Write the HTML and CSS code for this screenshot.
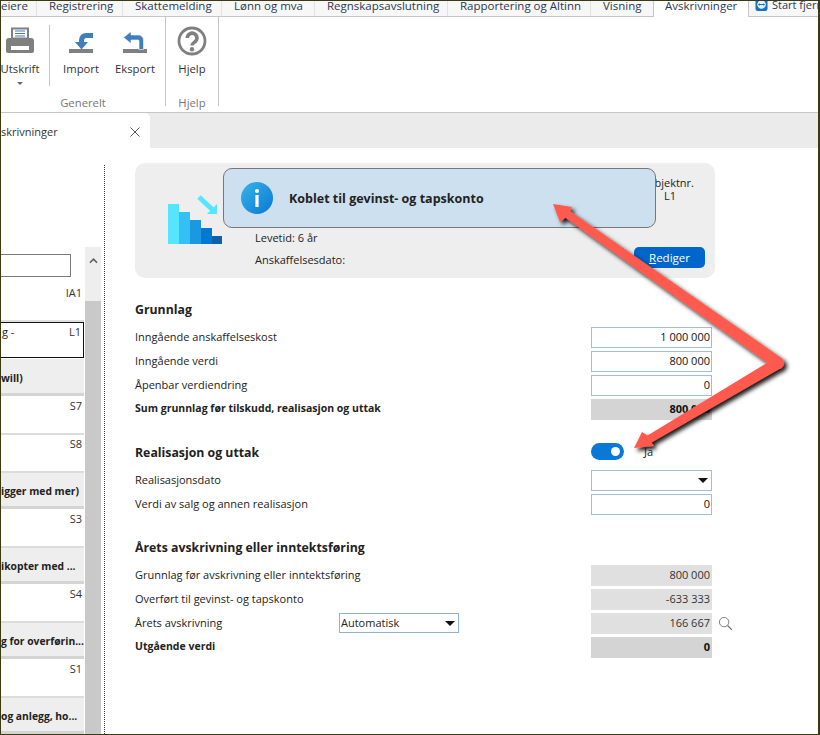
FILE: index.html
```html
<!DOCTYPE html>
<html lang="no">
<head>
  <meta charset="UTF-8" />
  <meta name="viewport" content="width=device-width, initial-scale=1" />
  <title>Avskrivninger</title>
  <link rel="stylesheet" href="styles.css">
</head>
<body>

  <div class="window">

    <div class="menu-tabs">
      <span class="menu-tab tab-eiere">eiere</span>
      <span class="menu-tab tab-reg">Registrering</span>
      <span class="menu-tab tab-skatt">Skattemelding</span>
      <span class="menu-tab tab-lonn">Lønn og mva</span>
      <span class="menu-tab tab-regn">Regnskapsavslutning</span>
      <span class="menu-tab tab-rapp">Rapportering og Altinn</span>
      <span class="menu-tab tab-vis">Visning</span>
      <span class="menu-tab menu-tab-active">Avskrivninger</span>
      <span class="menu-remote">
        <svg class="remote-icon" viewBox="0 0 14 14" width="13" height="13">
          <rect x="0.5" y="0" width="13" height="13" rx="2.5" fill="#1173cf"/>
          <circle cx="7" cy="6" r="4.6" fill="#e6f3fd"/>
          <path d="M3.2 6l1.8-1.5v1h4v-1L10.8 6 9 7.5v-1H5v1z" fill="#1173cf"/>
        </svg>
        <span>Start fjern</span>
      </span>
    </div>

    <div class="ribbon">
      <div class="ribbon-group group-generelt">
        <div class="ribbon-buttons">
          <div class="ribbon-btn btn-print">
            <svg viewBox="0 0 30 28" width="30" height="28">
              <path d="M7 1.500h16v10H7z" fill="#fff" stroke="#808080" stroke-width="2"/>
              <path d="M10 4h10M10 6.500h10M10 9h10" stroke="#3c7fc0" stroke-width="1.2"/>
              <path d="M4 11h22a3 3 0 0 1 3 3v10a2 2 0 0 1-2 2H3a2 2 0 0 1-2-2V14a3 3 0 0 1 3-3z" fill="#808080"/>
              <rect x="6" y="19" width="18" height="4" fill="#fff"/>
            </svg>
            <span>Utskrift</span>
            <i class="caret"></i>
          </div>
          <div class="ribbon-sep"></div>
          <div class="ribbon-btn btn-import">
            <svg viewBox="0 0 26 24" width="26" height="24">
              <rect x="1" y="18" width="24" height="4" fill="#808080"/>
              <path d="M25 2h-7a7 7 0 0 0-7 7v2H7l6.500 7.500L20 11h-4V9.500A2.500 2.500 0 0 1 18.500 7H25z" fill="#3f7fbd"/>
            </svg>
            <span>Import</span>
          </div>
          <div class="ribbon-btn btn-eksport">
            <svg viewBox="0 0 26 24" width="26" height="24">
              <rect x="1" y="18" width="24" height="4" fill="#808080"/>
              <path d="M9 0.500L1.500 6.500 9 12.500V9h7a1 1 0 0 1 1 1v8.500h4.500V9a5 5 0 0 0-5-5H9z" fill="#3f7fbd" stroke="#fff" stroke-width="0.6"/>
            </svg>
            <span>Eksport</span>
          </div>
        </div>
        <div class="ribbon-label">Generelt</div>
      </div>
      <div class="ribbon-group group-hjelp">
        <div class="ribbon-buttons">
          <div class="ribbon-btn btn-help">
            <svg viewBox="0 0 30 30" width="30" height="30">
              <circle cx="15" cy="15" r="13" fill="none" stroke="#808080" stroke-width="2.8"/>
              <path d="M10.300 12a4.800 4.800 0 1 1 7.700 3.800c-1.800 1.300-3 2-3 3.700" fill="none" stroke="#808080" stroke-width="3.600"/>
              <circle cx="15" cy="23.200" r="2.200" fill="#808080"/>
            </svg>
            <span>Hjelp</span>
          </div>
        </div>
        <div class="ribbon-label">Hjelp</div>
      </div>
    </div>

    <div class="doc-tabs">
      <div class="doc-tab">
        <span>skrivninger</span>
        <svg viewBox="0 0 10 10" width="10" height="10"><path d="M0.500 0.500l9 9M9.500 0.500l-9 9" stroke="#555" fill="none"/></svg>
      </div>
    </div>

    <div class="main">

      <div class="sidebar">
        <div class="side-list">
          <div class="side-search"></div>
          <div class="side-row side-first"><span class="side-code">IA1</span></div>
          <div class="side-row side-selected"><span>g -</span><span class="side-code">L1</span></div>
          <div class="side-head">will)</div>
          <div class="side-row"><span class="side-code">S7</span></div>
          <div class="side-row side-lined"><span class="side-code">S8</span></div>
          <div class="side-head side-head-lined">igger med mer)</div>
          <div class="side-row"><span class="side-code">S3</span></div>
          <div class="side-head side-head-lined">ikopter med ...</div>
          <div class="side-row"><span class="side-code">S4</span></div>
          <div class="side-head side-head-lined">g for overførin...</div>
          <div class="side-row"><span class="side-code">S1</span></div>
          <div class="side-head side-head-lined">og anlegg, ho...</div>
        </div>
        <div class="scrollbar">
          <div class="scroll-track">
            <svg viewBox="0 0 10 6" width="9" height="6"><path d="M1 5l4-4 4 4" fill="none" stroke="#606060" stroke-width="1.8"/></svg>
          </div>
          <div class="scroll-thumb"></div>
        </div>
      </div>

      <div class="content">

        <div class="asset-card">
          <svg class="asset-icon" viewBox="0 0 54 50" width="54" height="50">
            <rect x="0" y="9" width="11" height="40" fill="#55e5ff"/>
            <rect x="11" y="17" width="11" height="32" fill="#35c0f5"/>
            <rect x="22" y="25" width="11" height="24" fill="#1a98e0"/>
            <rect x="33" y="33" width="11" height="16" fill="#0078d4"/>
            <rect x="44" y="41" width="10" height="8" fill="#0f5fad"/>
            <path d="M31 2l16 15" stroke="#55e5ff" stroke-width="5" fill="none"/>
            <path d="M49 9v10H39z" fill="#55e5ff"/>
          </svg>
          <div class="asset-info">
            <div>Levetid: 6 år</div>
            <div>Anskaffelsesdato:</div>
          </div>
          <div class="asset-side">
            <div class="asset-object">
              <div>Objektnr.</div>
              <div>L1</div>
            </div>
            <button class="edit-btn" type="button"><u>R</u>ediger</button>
          </div>
          <div class="toast">
            <svg viewBox="0 0 32 32" width="32" height="32">
              <defs>
                <linearGradient id="info-grad" x1="0" y1="0" x2="1" y2="1">
                  <stop offset="0" stop-color="#36b4ea"/>
                  <stop offset="1" stop-color="#0a78d2"/>
                </linearGradient>
              </defs>
              <circle cx="16" cy="16" r="16" fill="url(#info-grad)"/>
              <rect x="14.400" y="13" width="3.200" height="12" fill="#fff"/>
              <circle cx="16" cy="9" r="2" fill="#fff"/>
            </svg>
            <strong>Koblet til gevinst- og tapskonto</strong>
          </div>
        </div>

        <h2 class="section-title title-grunnlag">Grunnlag</h2>
        <div class="form-row"><span>Inngående anskaffelseskost</span><span class="field">1 000 000</span></div>
        <div class="form-row"><span>Inngående verdi</span><span class="field">800 000</span></div>
        <div class="form-row"><span>Åpenbar verdiendring</span><span class="field">0</span></div>
        <div class="form-row form-sum"><span>Sum grunnlag før tilskudd, realisasjon og uttak</span><span class="field field-sum">800 000</span></div>

        <div class="section-row">
          <h2 class="section-title">Realisasjon og uttak</h2>
          <span class="toggle-wrap"><i class="toggle"></i><span>Ja</span></span>
        </div>
        <div class="form-row"><span>Realisasjonsdato</span><span class="field field-select"><i class="select-caret"></i></span></div>
        <div class="form-row"><span>Verdi av salg og annen realisasjon</span><span class="field">0</span></div>

        <h2 class="section-title title-aar">Årets avskrivning eller inntektsføring</h2>
        <div class="form-row"><span>Grunnlag før avskrivning eller inntektsføring</span><span class="field field-ro">800 000</span></div>
        <div class="form-row"><span>Overført til gevinst- og tapskonto</span><span class="field field-ro">-633 333</span></div>
        <div class="form-row">
          <span class="row-label-short">Årets avskrivning</span>
          <span class="mode-select">Automatisk<i class="select-caret"></i></span>
          <span class="field field-ro">166 667</span>
          <svg class="lookup" viewBox="0 0 16 16" width="15" height="15">
            <circle cx="6.500" cy="6.500" r="5" fill="none" stroke="#777"/>
            <path d="M10.200 10.200l4.600 4.600" stroke="#777" stroke-width="1.400"/>
          </svg>
        </div>
        <div class="form-row form-sum"><span>Utgående verdi</span><span class="field field-sum">0</span></div>

      </div>
    </div>

    <svg class="callout" viewBox="0 0 820 735" width="820" height="735">
      <defs>
        <filter id="arrow-shadow" x="-10%" y="-10%" width="120%" height="120%">
          <feDropShadow dx="3" dy="3" stdDeviation="2" flood-color="#000" flood-opacity="0.9"/>
        </filter>
      </defs>
      <g filter="url(#arrow-shadow)" fill="#ff5a4d">
        <path d="M553 204L572 207 570 211 781.500 358A6 6 0 0 1 774.500 368L565.400 217.700 560 222Z"/>
        <path d="M634 448L642 432 647.500 435.600 775 358A6 6 0 0 1 781 368L651.500 442.400 654 446Z"/>
      </g>
    </svg>

  </div>

</body>
</html>
```

FILE: styles.css
```css
* {
  box-sizing: border-box;
}

body {
  margin: 0;
  font-family: "Open Sans", "Noto Sans", sans-serif;
  font-size: 11px;
  color: #222;
  background: #fff;
}

.window {
  position: relative;
  width: 820px;
  height: 735px;
  overflow: hidden;
  border: 1px solid #3b3a10;
  border-width: 1px 2px 1px 1px;
  display: flex;
  flex-direction: column;
}

/* top menu */
.menu-tabs {
  display: flex;
  height: 16px;
  flex: none;
  background: #f7f7f7;
  border-bottom: 1px solid #c6c6c6;
  white-space: nowrap;
  font-size: 11.500px;
}

.menu-tab {
  flex: none;
  height: 15px;
  line-height: 10px;
  border-right: 1px solid #e2e2e2;
  color: #2b3a55;
  padding-left: 12px;
}

.tab-eiere { width: 36px; padding-left: 0; }
.tab-reg { width: 86px; }
.tab-skatt { width: 99px; }
.tab-lonn { width: 93px; }
.tab-regn { width: 133px; }
.tab-rapp { width: 143px; }
.tab-vis { width: 62px; border-right: 0; }

.menu-tab-active {
  width: 96px;
  height: 16px;
  background: #fff;
  border-left: 1px solid #c6c6c6;
  border-right: 1px solid #c6c6c6;
  padding-left: 11px;
}

.menu-remote {
  display: flex;
  line-height: 8px;
  margin-left: 6px;
  gap: 4px;
  color: #2b3a55;
  font-size: 11px;
}

.remote-icon {
  flex: none;
  margin-top: -2px;
}

/* ribbon */
.ribbon {
  display: flex;
  height: 96px;
  flex: none;
  background: #fff;
  border-bottom: 1px solid #c6c6c6;
}

.ribbon-group {
  display: flex;
  flex-direction: column;
  border-right: 1px solid #c6c6c6;
  margin-bottom: 6px;
}

.group-generelt { width: 165px; }
.group-hjelp { width: 53px; }

.ribbon-buttons {
  display: flex;
  height: 70px;
}

.ribbon-btn {
  display: flex;
  flex-direction: column;
  align-items: center;
  color: #333;
  font-size: 11.300px;
}

.ribbon-btn svg {
  flex: none;
}

.btn-print {
  width: 38px;
  padding-top: 10px;
}

.btn-print span {
  margin-top: 6px;
}

.caret {
  margin-top: 6px;
  border: 3px solid transparent;
  border-top: 3px solid #666;
  border-bottom: 0;
}

.ribbon-sep {
  width: 1px;
  height: 61px;
  margin: 8px 0 0 10px;
  background: #c6c6c6;
}

.btn-import {
  width: 52px;
  margin-left: 5px;
  padding-top: 14px;
}

.btn-eksport {
  width: 54px;
  margin-left: 1px;
  padding-top: 14px;
}

.btn-import span,
.btn-eksport span {
  margin-top: 6px;
}

.btn-help {
  width: 52px;
  padding-top: 9px;
}

.btn-help span {
  margin-top: 5px;
}

.ribbon-label {
  margin: auto 0 -5px;
  text-align: center;
  color: #777;
  font-size: 11.300px;
  line-height: 16px;
}

/* document tabs */
.doc-tabs {
  height: 35px;
  flex: none;
  background: #ebebeb;
}

.doc-tab {
  display: flex;
  align-items: center;
  justify-content: space-between;
  width: 149px;
  height: 35px;
  padding: 2px 10px 0 0;
  background: #fff;
  border-top-right-radius: 5px;
  color: #333;
}

.main {
  flex: 1;
  display: flex;
  min-height: 0;
}

/* left list */
.sidebar {
  display: flex;
  width: 104px;
  flex: none;
  margin-top: 17px;
  padding-top: 82px;
  border-right: 1px dotted #333;
}

.side-list {
  width: 83px;
  flex: none;
  display: flex;
  flex-direction: column;
}

.side-search {
  width: 70px;
  height: 23px;
  flex: none;
  margin-top: 7px;
  border: 1px solid #7a7a7a;
  border-left: 0;
}

.side-row {
  display: flex;
  justify-content: space-between;
  height: 37px;
  flex: none;
  padding: 3px 2px 0 1px;
  line-height: 14px;
}

.side-first {
  height: 45px;
  padding-top: 9px;
  border-bottom: 2px solid #e0e0e0;
}

.side-selected {
  height: 36px;
  border: 1px solid #111;
  border-left: 0;
  margin-bottom: 1px;
  padding: 2px 2px 0 1px;
}

.side-lined {
  height: 38px;
  border-top: 2px solid #dcdcdc;
  padding-top: 2px;
}

.side-code {
  margin-left: auto;
  color: #333;
}

.side-head {
  height: 37px;
  flex: none;
  display: flex;
  align-items: center;
  padding-top: 4px;
  background: #eeeeee;
  border-bottom: 3px solid #d4d4d4;
  font-weight: 700;
  white-space: nowrap;
  font-size: 10.300px;
}

.side-head-lined {
  height: 38px;
  padding-top: 3px;
  border-top: 2px solid #dcdcdc;
}

.scrollbar {
  width: 16px;
  margin-left: 1px;
  display: flex;
  flex-direction: column;
}

.scroll-track {
  height: 54px;
  flex: none;
  background: #eeeeee;
  text-align: center;
  padding-top: 5px;
}

.scroll-thumb {
  flex: 1;
  background: #c9c9c9;
}

/* right panel */
.content {
  flex: 1;
  padding: 15px 0 0 30px;
  min-width: 0;
}

.asset-card {
  position: relative;
  display: flex;
  width: 580px;
  height: 115px;
  background: #eeeeee;
  border-radius: 10px;
}

.asset-icon {
  flex: none;
  margin: 32px 0 0 33px;
}

.asset-info {
  display: flex;
  flex-direction: column;
  gap: 7px;
  margin: 67px 0 0 33px;
  line-height: 15px;
}

.asset-side {
  margin-left: auto;
  display: flex;
  flex-direction: column;
  width: 100px;
  margin-right: 10px;
}

.asset-object {
  align-self: flex-end;
  margin: 13px 11px 0 0;
  text-align: center;
  line-height: 13px;
}

.edit-btn {
  width: 71px;
  height: 21px;
  margin-top: 45px;
  padding: 0;
  align-self: flex-end;
  border: none;
  border-radius: 5px;
  background: #0066cc;
  color: #fff;
  font: inherit;
  font-size: 11.500px;
}

.toast {
  position: absolute;
  left: 88px;
  top: 5px;
  display: flex;
  align-items: center;
  gap: 16px;
  width: 433px;
  height: 60px;
  padding-left: 17px;
  background: #cde0ef;
  border: 1px solid #777;
  border-radius: 9px;
  font-size: 12.500px;
}

.section-title {
  margin: 0;
  font-size: 12.300px;
  font-weight: 700;
  line-height: 18px;
  color: #222;
}

.title-grunnlag { margin: 23px 0 6px; }
.title-aar { margin: 23px 0 6px; }

.section-row {
  display: flex;
  align-items: center;
  height: 18px;
  margin: 22px 0 7px;
}

.section-row .section-title {
  flex: 0 0 456px;
  margin-top: 2px;
}

.form-row {
  display: flex;
  align-items: center;
  width: 600px;
  height: 24px;
}

.form-sum {
  font-weight: 700;
  font-size: 10.500px;
}

.form-row > span:first-child {
  flex: 0 0 456px;
  padding-bottom: 2px;
}

.form-row > .row-label-short:first-child {
  flex: 0 0 204px;
}

.field {
  position: relative;
  flex: none;
  width: 121px;
  height: 21px;
  line-height: 17px;
  padding-right: 1px;
  text-align: right;
  background: #fff;
  border: 1px solid #a3bdd9;
  font-size: 11px;
  color: #111;
}

.field-ro {
  background: #e0e0e0;
  border-color: #e0e0e0;
  color: #333;
}

.field-sum {
  background: #d4d4d4;
  border-color: #d4d4d4;
  font-weight: 700;
}

.select-caret {
  position: absolute;
  right: 3px;
  top: 7px;
  border: 5px solid transparent;
  border-top: 5px solid #111;
  border-bottom: 0;
}

.toggle-wrap {
  display: flex;
  align-items: center;
  gap: 20px;
  margin-top: -2px;
}

.toggle {
  position: relative;
  display: block;
  width: 33px;
  height: 17px;
  border-radius: 9px;
  background: #0a78d7;
}

.toggle::after {
  content: "";
  position: absolute;
  right: 4px;
  top: 4px;
  width: 9px;
  height: 9px;
  border-radius: 50%;
  background: #fff;
}

.mode-select {
  position: relative;
  flex: none;
  width: 120px;
  height: 20px;
  margin-right: 132px;
  padding-left: 1px;
  line-height: 18px;
  background: #fff;
  border: 1px solid #8fb2d2;
}

.lookup {
  margin-left: 6px;
  flex: none;
}

.callout {
  position: absolute;
  left: -1px;
  top: -1px;
  pointer-events: none;
}
```
